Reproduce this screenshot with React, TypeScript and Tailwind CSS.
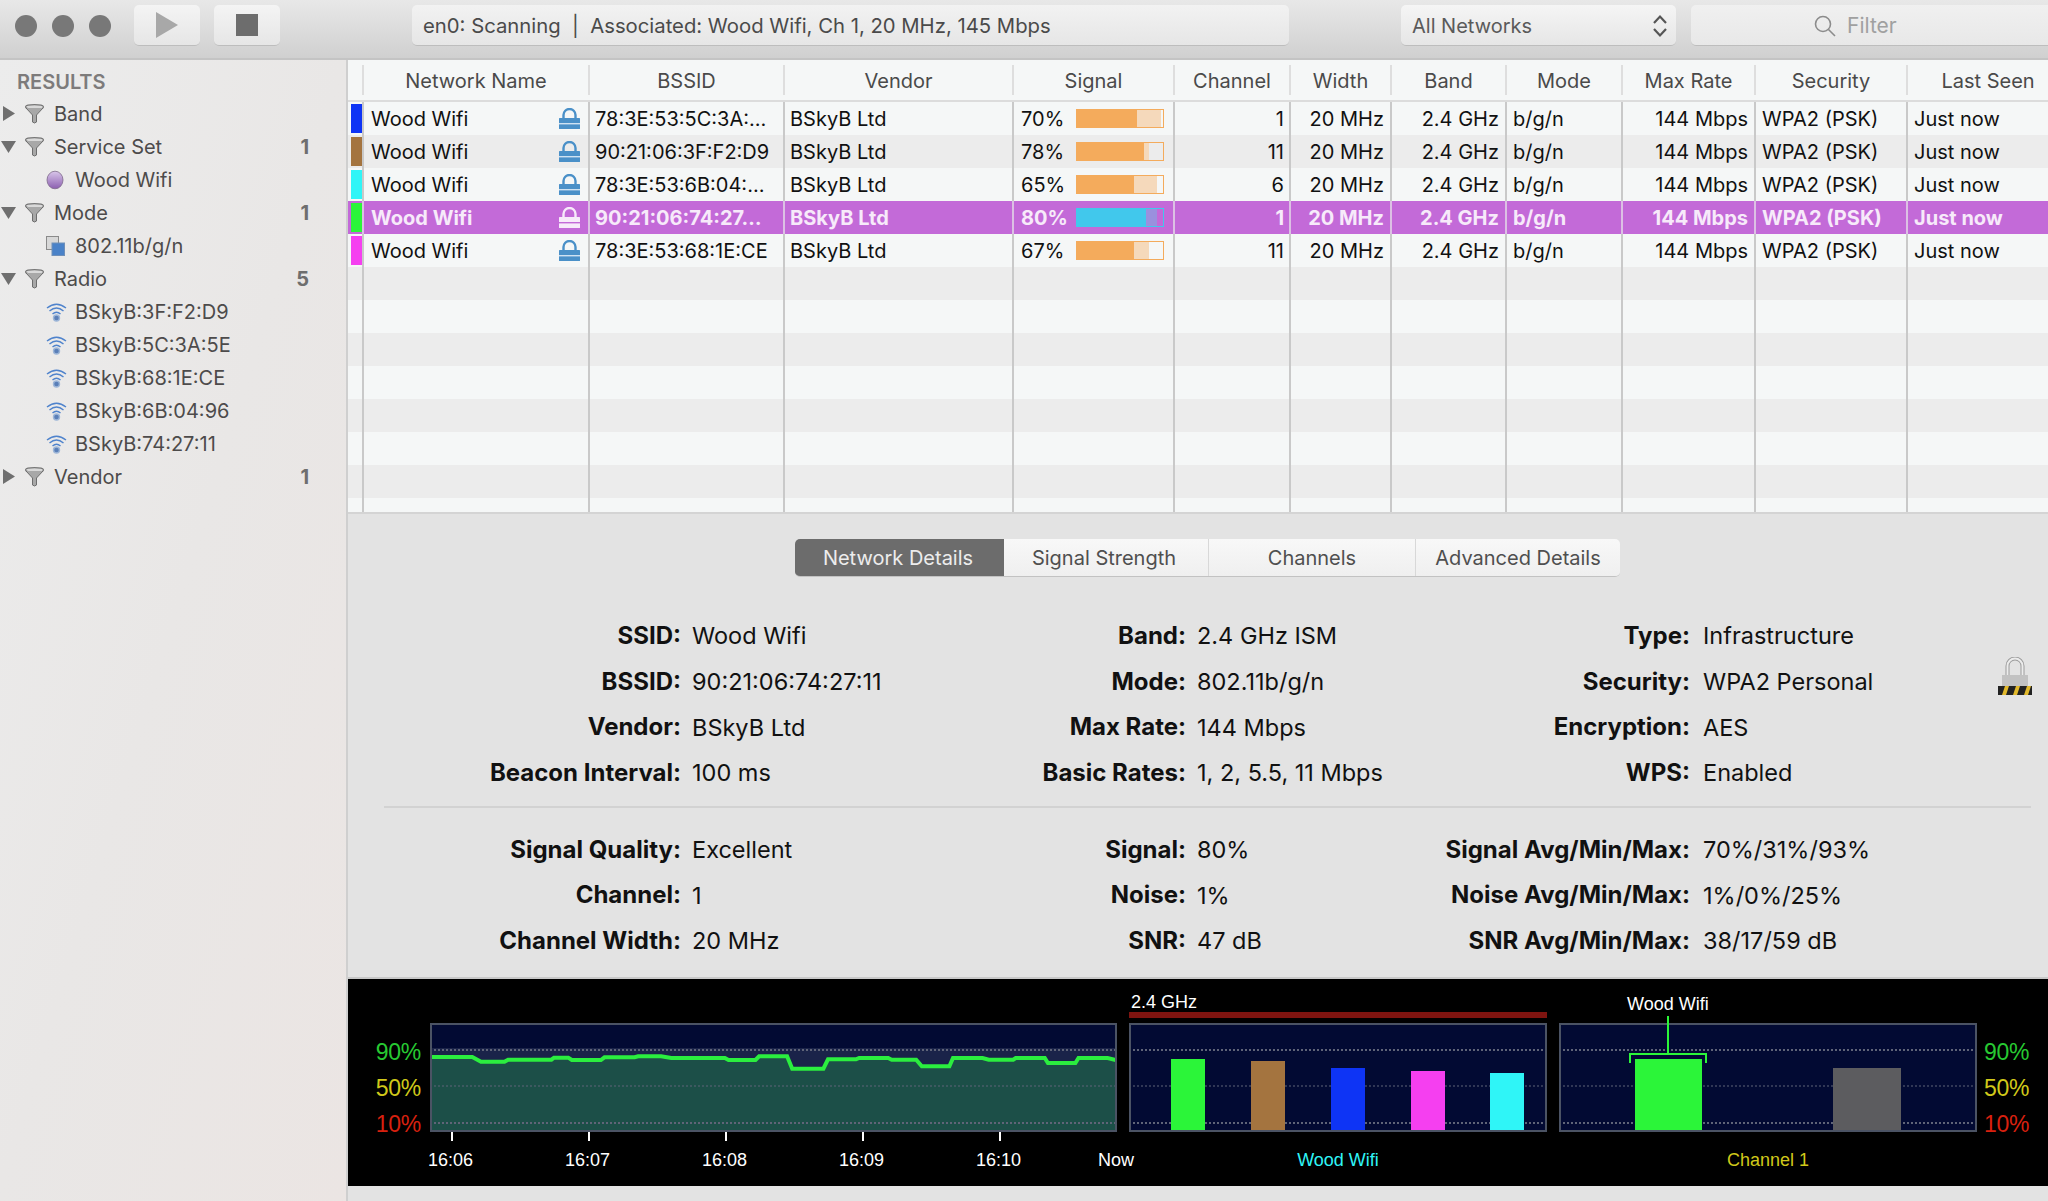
import React from "react";

const font = "font-['Inter','Liberation_Sans',sans-serif]";

function Triangle({ open }: { open: boolean }) {
  return (
    <svg width="15" height="15" viewBox="0 0 15 15" className="shrink-0">
      {open ? <path d="M0 2 H15 L7.5 14 Z" fill="#6f6f6f" /> : <path d="M2 0 L14 7.5 L2 15 Z" fill="#6f6f6f" />}
    </svg>
  );
}
function Funnel() {
  return (
    <svg width="19" height="20" viewBox="0 0 19 20" className="shrink-0 ml-[1px]">
      <ellipse cx="9.5" cy="3" rx="9" ry="2.4" fill="#d9d9d9" stroke="#777" strokeWidth="1.2" />
      <path d="M1 4 L7.5 11 V18 Q9.5 20 11.5 18 V11 L18 4" fill="#a8a8a8" stroke="#6d6d6d" strokeWidth="1" />
    </svg>
  );
}
function Ball() {
  return (
    <svg width="18" height="20" viewBox="0 0 18 20" className="shrink-0">
      <defs>
        <linearGradient id="ball" x1="0" y1="0" x2="0" y2="1">
          <stop offset="0" stopColor="#d9c6ea" />
          <stop offset="1" stopColor="#8c5fb0" />
        </linearGradient>
      </defs>
      <ellipse cx="9" cy="10" rx="8" ry="8.8" fill="url(#ball)" stroke="#7d6a8a" strokeWidth="0.8" />
    </svg>
  );
}
function ModeIcon() {
  return (
    <svg width="19" height="20" viewBox="0 0 19 20" className="shrink-0">
      <rect x="0.5" y="0.5" width="12" height="13" fill="#d8d8d8" stroke="#8a8a8a" />
      <rect x="6" y="7" width="12.5" height="12.5" fill="#4a82c8" stroke="#6f8fb8" />
    </svg>
  );
}
function WifiIcon() {
  return (
    <svg width="21" height="20" viewBox="0 0 21 20" className="shrink-0" fill="none" stroke="#4f83cc" strokeWidth="1.4">
      <path d="M1 6 Q10.5 -1.5 20 6" />
      <path d="M3.5 9 Q10.5 3 17.5 9" />
      <path d="M6.5 12 Q10.5 8.5 14.5 12" />
      <circle cx="10.5" cy="16" r="3" fill="#5a7fb8" stroke="#9db6d8" />
    </svg>
  );
}
function Lock({ white }: { white: boolean }) {
  const c = white ? "#f7eafa" : "#4a90c8";
  const s = white ? "#c36ad8" : "#cfe2f2";
  return (
    <svg width="21" height="21" viewBox="0 0 21 21" className="shrink-0">
      <path d="M4.5 10 V7 a6 6 0 0 1 12 0 V10" fill="none" stroke={c} strokeWidth="2.4" />
      <rect x="0" y="10" width="21" height="11" fill={c} rx="0.5" />
      <rect x="0" y="15" width="21" height="1.4" fill={s} />
    </svg>
  );
}

function SideRow({ kind, label, count, open, icon, }: { kind: "head" | "item"; label: string; count?: string; open?: boolean; icon?: React.ReactNode }) {
  if (kind === "head") {
    return (
      <div className="flex h-[33px] items-center pl-[1px] pr-[37px] text-[#4d4b4b] text-[20px]">
        <span className="w-[23px] flex"><Triangle open={!!open} /></span>
        <Funnel />
        <span className="ml-[10px] flex-1">{label}</span>
        <span className="font-bold text-[#6e6e6e]">{count}</span>
      </div>
    );
  }
  return (
    <div className="flex h-[33px] items-center pl-[46px] text-[#4d4b4b] text-[20px]">
      <span className="w-[29px] flex">{icon}</span>
      <span>{label}</span>
    </div>
  );
}

function Sidebar() {
  return (
    <div className="w-[348px] shrink-0 border-r-2 border-[#cfcfcf] bg-gradient-to-br from-[#ececec] via-[#e9e7e6] to-[#ebe5e3] pt-[6px]">
      <div className="h-[31px] pl-[17px] flex items-center text-[20px] font-semibold text-[#7d7b7b]">RESULTS</div>
      <SideRow kind="head" label="Band" />
      <SideRow kind="head" label="Service Set" count="1" open />
      <SideRow kind="item" label="Wood Wifi" icon={<Ball />} />
      <SideRow kind="head" label="Mode" count="1" open />
      <SideRow kind="item" label="802.11b/g/n" icon={<ModeIcon />} />
      <SideRow kind="head" label="Radio" count="5" open />
      {["BSkyB:3F:F2:D9", "BSkyB:5C:3A:5E", "BSkyB:68:1E:CE", "BSkyB:6B:04:96", "BSkyB:74:27:11"].map((l) => (
        <SideRow key={l} kind="item" label={l} icon={<WifiIcon />} />
      ))}
      <SideRow kind="head" label="Vendor" count="1" />
    </div>
  );
}

function Toolbar() {
  return (
    <div className="h-[60px] shrink-0 flex items-start pt-[5px] border-b-2 border-[#c4c4c4] bg-gradient-to-b from-[#e8e8e8] to-[#d0d0d0]">
      <div className="flex gap-[15px] pl-[15px] pt-[10px]">
        <div className="w-[22px] h-[22px] rounded-full bg-[#787878]" />
        <div className="w-[22px] h-[22px] rounded-full bg-[#787878]" />
        <div className="w-[22px] h-[22px] rounded-full bg-[#787878]" />
      </div>
      <button className="ml-[23px] w-[66px] h-[41px] rounded-[5px] bg-gradient-to-b from-[#f4f4f4] to-[#e6e6e6] border-b border-[#bdbdbd] flex items-center justify-center">
        <svg width="22" height="26" viewBox="0 0 22 26"><path d="M0 0 L22 13 L0 26 Z" fill="#a8a8a8" /></svg>
      </button>
      <button className="ml-[14px] w-[66px] h-[41px] rounded-[5px] bg-gradient-to-b from-[#f4f4f4] to-[#e6e6e6] border-b border-[#bdbdbd] flex items-center justify-center">
        <div className="w-[22px] h-[22px] bg-[#6d6d6d]" />
      </button>
      <div className="ml-[132px] w-[877px] h-[41px] rounded-[5px] bg-gradient-to-b from-[#f2f2f2] to-[#e6e6e6] border-b border-[#bdbdbd] flex items-center pl-[11px] pt-[2px] text-[20.3px] text-[#4a4a4a] whitespace-pre">
        en0: Scanning  |  Associated: Wood Wifi, Ch 1, 20 MHz, 145 Mbps
      </div>
      <div className="ml-[112px] w-[275px] h-[41px] rounded-[5px] bg-gradient-to-b from-[#f5f5f5] to-[#e6e6e6] border-b border-[#bdbdbd] flex items-center justify-between pl-[11px] pr-[8px] pt-[1px] text-[20px] text-[#5a5a5a]">
        <span>All Networks</span>
        <svg width="16" height="24" viewBox="0 0 16 24" fill="none" stroke="#555" strokeWidth="2.2">
          <path d="M2 9 L8 2.5 L14 9" />
          <path d="M2 15 L8 21.5 L14 15" />
        </svg>
      </div>
      <div className="ml-[15px] flex-1 h-[41px] rounded-l-[5px] bg-gradient-to-b from-[#f0f0f0] to-[#e8e8e8] border-b border-[#bdbdbd] flex items-center pl-[123px] pt-[2px] text-[21px] text-[#a0a0a0]">
        <svg width="22" height="22" viewBox="0 0 22 22" fill="none" stroke="#8c8c8c" strokeWidth="1.6" className="mr-[11px]">
          <circle cx="9" cy="9" r="7.5" />
          <path d="M14.5 14.5 L21 21" />
        </svg>
        <span>Filter</span>
      </div>
    </div>
  );
}

const HEADERS = ["Network Name", "BSSID", "Vendor", "Signal", "Channel", "Width", "Band", "Mode", "Max Rate", "Security", "Last Seen"];

function TableHeader() {
  const w = ["w-[226px]", "w-[195px]", "w-[229px]", "w-[161px]", "w-[116px]", "w-[101px]", "w-[115px]", "w-[116px]", "w-[133px]", "w-[152px]", "w-[160px]"];
  return (
    <div className="h-[42px] shrink-0 flex bg-[#f5f7f7] border-b-2 border-[#dcdcdc] pt-[5px] pb-[5px] text-[20px] text-[#4a4a4a]">
      <div className="w-[16px] shrink-0 border-r-2 border-[#dedede]" />
      {HEADERS.map((h, i) => (
        <div key={h} className={`${w[i]} shrink-0 flex items-center justify-center pt-[2px] ${i < 10 ? "border-r-2 border-[#dedede]" : ""}`}>
          {h}
        </div>
      ))}
    </div>
  );
}

interface Row { color: string; bssid: string; pct: number; fill: number; avg: number; ch: string; sel?: boolean }
const ROWS: Row[] = [
  { color: "bg-[#0e34f5]", bssid: "78:3E:53:5C:3A:…", pct: 70, fill: 70, avg: 98, ch: "1" },
  { color: "bg-[#a4743f]", bssid: "90:21:06:3F:F2:D9", pct: 78, fill: 78, avg: 84, ch: "11" },
  { color: "bg-[#2ff5f7]", bssid: "78:3E:53:6B:04:…", pct: 65, fill: 66, avg: 93, ch: "6" },
  { color: "bg-[#2bf539]", bssid: "90:21:06:74:27…", pct: 80, fill: 80, avg: 93, ch: "1", sel: true },
  { color: "bg-[#f53ff0]", bssid: "78:3E:53:68:1E:CE", pct: 67, fill: 66, avg: 84, ch: "11" },
];

function SignalBar({ r }: { r: Row }) {
  return (
    <div className={`w-[88px] h-[19px] border flex ${r.sel ? "border-[#41c8ec]" : "border-[#f4ab5c]"}`}>
      <div className={r.sel ? "bg-[#41c8ec]" : "bg-[#f4ab5c]"} style={{ width: `${r.fill}%` }} />
      <div className={r.sel ? "bg-[#9a90de]" : "bg-[#f5d9bb]"} style={{ width: `${r.avg - r.fill}%` }} />
    </div>
  );
}

function DataRow({ r, i }: { r?: Row; i: number }) {
  const sep = r?.sel ? "border-[#dcc0e4]" : "border-[#c9c9c9]";
  const bg = r?.sel ? "bg-[#c36ad8]" : i % 2 === 0 ? "bg-[#f5f7f7]" : "bg-[#ececec]";
  const txt = r?.sel ? "text-[#f7eafa] font-bold" : "text-[#111111]";
  const cell = `h-full flex items-center border-r-2 ${sep}`;
  return (
    <div className={`h-[33px] shrink-0 flex text-[20px] ${bg} ${txt}`}>
      <div className={`w-[16px] ${cell} pl-[3px] py-[2px]`}>
        {r && <div className={`w-[11px] h-full ${r.color}`} />}
      </div>
      <div className={`w-[226px] ${cell} pl-[7px] pr-[8px] justify-between`}>
        {r && <><span>Wood Wifi</span><Lock white={!!r.sel} /></>}
      </div>
      <div className={`w-[195px] ${cell} pl-[5px] whitespace-nowrap`}>{r?.bssid}</div>
      <div className={`w-[229px] ${cell} pl-[5px]`}>{r && "BSkyB Ltd"}</div>
      <div className={`w-[161px] ${cell} pl-[7px] justify-between pr-[9px]`}>
        {r && <><span>{r.pct}%</span><SignalBar r={r} /></>}
      </div>
      <div className={`w-[116px] ${cell} justify-end pr-[5px]`}>{r?.ch}</div>
      <div className={`w-[101px] ${cell} justify-end pr-[6px]`}>{r && "20 MHz"}</div>
      <div className={`w-[115px] ${cell} justify-end pr-[6px]`}>{r && "2.4 GHz"}</div>
      <div className={`w-[116px] ${cell} pl-[6px]`}>{r && "b/g/n"}</div>
      <div className={`w-[133px] ${cell} justify-end pr-[6px]`}>{r && "144 Mbps"}</div>
      <div className={`w-[152px] ${cell} pl-[6px]`}>{r && "WPA2 (PSK)"}</div>
      <div className="w-[140px] h-full flex items-center pl-[6px]">{r && "Just now"}</div>
    </div>
  );
}

function Table() {
  const empties = Array.from({ length: 8 }, (_, k) => k + 5);
  return (
    <div className="h-[454px] shrink-0 flex flex-col overflow-hidden border-b-2 border-[#d4d4d4]">
      <TableHeader />
      {ROWS.map((r, i) => <DataRow key={i} r={r} i={i} />)}
      {empties.map((i) => <DataRow key={i} i={i} />)}
    </div>
  );
}

function Tabs() {
  const names = ["Network Details", "Signal Strength", "Channels", "Advanced Details"];
  const w = ["w-[209px]", "w-[205px]", "w-[207px]", "w-[204px]"];
  return (
    <div className="mt-[25px] ml-[447px] w-[825px] h-[38px] shrink-0 flex rounded-[5px] overflow-hidden border-b border-[#c2c2c2] text-[20px]">
      {names.map((n, i) => (
        <div
          key={n}
          className={`${w[i]} flex items-center justify-center ${i === 0 ? "bg-[#6c6c6c] text-[#ececec] pr-[3px]" : "bg-gradient-to-b from-[#f8f8f8] to-[#efefef] text-[#4f4f4f]"} ${i === 1 ? "pr-[4px]" : ""} ${i > 0 && i < 3 ? "border-r border-[#d8d8d8]" : ""}`}
        >
          {n}
        </div>
      ))}
    </div>
  );
}

function Pair({ rows }: { rows: [string, string, string, string, string, string][] }) {
  return (
    <div className="grid grid-cols-[333px_180px_325px_180px_324px_1fr] text-[23.5px] text-[#111111]">
      {rows.flat().map((t, i) => (
        <div key={i} className={`h-[45.7px] flex items-center whitespace-nowrap ${i % 2 === 0 ? "justify-end font-bold text-[24px]" : i % 6 === 5 ? "pl-[13px]" : "pl-[11px]"}`}>
          {t}
        </div>
      ))}
    </div>
  );
}

function BigLock() {
  return (
    <svg width="36" height="38" viewBox="0 0 36 38">
      <path d="M10.5 20 V9 a7.5 7.5 0 0 1 15 0 V20" fill="none" stroke="#9c9c9c" strokeWidth="4" />
      <path d="M10.5 20 V9 a7.5 7.5 0 0 1 15 0 V20" fill="none" stroke="#ececec" strokeWidth="2" />
      <rect x="5" y="18" width="26" height="12" fill="#c2c2c2" />
      <rect x="1" y="29" width="34" height="9" fill="#222" />
      <path d="M5 38 L8 29 H12 L9 38 Z M16 38 L19 29 H23 L20 38 Z M27 38 L30 29 H34 L31 38 Z" fill="#e2b92c" />
    </svg>
  );
}

const LINE: [number, number][] = [[177,290],[260,290],[277,304],[323,304],[330,298],[415,298],[420,292],[448,292],[455,299],[512,299],[519,291],[578,291],[585,288],[630,288],[650,293],[755,293],[762,299],[815,299],[822,288],[877,288],[887,325],[948,325],[957,297],[1012,297],[1018,293],[1075,293],[1082,298],[1130,298],[1141,318],[1195,318],[1202,293],[1260,293],[1272,298],[1320,298],[1325,293],[1382,293],[1388,308],[1442,308],[1448,293],[1505,293],[1523,300]];

function Grid({ w }: { w: number }) {
  return (
    <>
      {[27, 63, 100].map((y) => (
        <line key={y} x1="0" x2={w} y1={y} y2={y} stroke="#5f6478" strokeWidth={y === 63 ? 1 : 2} strokeDasharray="2 2" />
      ))}
    </>
  );
}

function LinePlot() {
  const pts = LINE.map(([x, y]) => [(x - 177) / 1.96, (y - 188) / 3]);
  const d = pts.map((p) => `${p[0].toFixed(1)},${p[1].toFixed(1)}`).join(" ");
  return (
    <svg width="687" height="109" viewBox="0 0 687 109" className="block">
      <rect width="687" height="109" fill="#020a33" />
      <rect y="25" width="687" height="25" fill="#1a2349" />
      <polygon points={`0,109 ${d} 687,109`} fill="#1c4f48" />
      <Grid w={687} />
      <polyline points={d} fill="none" stroke="#2bee3f" strokeWidth="4" />
      <rect x="1" y="1" width="685" height="107" fill="none" stroke="#4b5364" strokeWidth="2" />
    </svg>
  );
}

function BandPlot() {
  const bars: [number, number, string][] = [[42, 36, "#2bf539"], [122, 38, "#a4743f"], [202, 45, "#0e34f5"], [282, 48, "#f53ff0"], [361, 50, "#2ff5f7"]];
  return (
    <svg width="418" height="109" viewBox="0 0 418 109" className="block">
      <rect width="418" height="109" fill="#020a33" />
      <Grid w={418} />
      {bars.map(([x, y, c]) => <rect key={x} x={x} y={y} width="34" height={107 - y} fill={c} />)}
      <rect x="1" y="1" width="416" height="107" fill="none" stroke="#4b5364" strokeWidth="2" />
    </svg>
  );
}

function ChannelPlot() {
  return (
    <svg width="418" height="109" viewBox="0 0 418 109" className="block overflow-visible">
      <rect width="418" height="109" fill="#020a33" />
      <Grid w={418} />
      <rect x="76" y="36" width="67" height="71" fill="#2bf539" />
      <rect x="274" y="45" width="68" height="62" fill="#5c5c5f" />
      <rect x="1" y="1" width="416" height="107" fill="none" stroke="#4b5364" strokeWidth="2" />
      <path d="M109 -7 V30 M71 40 V31 H147 V40" fill="none" stroke="#2bf539" strokeWidth="2" />
    </svg>
  );
}

function Pcts({ align }: { align: string }) {
  return (
    <div className={`h-[109px] flex flex-col ${align} text-[23px] tracking-[-0.3px] leading-[23px] pt-[18px] gap-[13px]`}>
      <span className="text-[#27c932]">90%</span>
      <span className="text-[#d0c81a]">50%</span>
      <span className="text-[#d8200f]">10%</span>
    </div>
  );
}

function Charts() {
  const ticks = ["16:06", "16:07", "16:08", "16:09", "16:10"];
  return (
    <div className="h-[209px] shrink-0 bg-black border-t-2 border-[#c8c8c8] font-['Liberation_Sans',sans-serif] text-[18px] text-white grid grid-cols-[74px_687px_12px_418px_12px_418px_79px] grid-rows-[44px_109px_54px] pl-[8px]">
      <div />
      <div />
      <div />
      <div className="flex flex-col pt-[14px]">
        <span className="pl-[2px] leading-[19px]">2.4 GHz</span>
        <div className="h-[6px] bg-[#7e1410]" />
      </div>
      <div />
      <div className="pt-[12px] pl-[68px]"><span className="leading-[20px]">Wood Wifi</span></div>
      <div />

      <Pcts align="items-end pr-[9px]" />
      <LinePlot />
      <div />
      <BandPlot />
      <div />
      <ChannelPlot />
      <Pcts align="items-start pl-[7px]" />

      <div />
      <div>
        <div className="flex pl-[21px] gap-[135px]">
          {ticks.map((t) => <div key={t} className="w-[2px] h-[9px] bg-white shrink-0" />)}
        </div>
        <div className="flex ml-[-2px] mt-[6px]">
          {ticks.map((t) => <span key={t} className="w-[137px] shrink-0">{t}</span>)}
          <span className="ml-[-15px] shrink-0">Now</span>
        </div>
      </div>
      <div />
      <div className="text-[#2ff5f7] text-center pt-[15px]">Wood Wifi</div>
      <div />
      <div className="text-[#d0c81a] text-center pt-[15px]">Channel 1</div>
      <div />
    </div>
  );
}

export default function App() {
  return (
    <div className={`w-[2048px] h-[1201px] overflow-hidden flex flex-col bg-[#e3e3e3] ${font}`}>
      <Toolbar />
      <div className="flex flex-1 min-h-0">
        <Sidebar />
        <div className="flex-1 min-w-0 flex flex-col relative">
          <Table />
          <Tabs />
          <div className="mt-[36px]">
            <Pair rows={[
              ["SSID:", "Wood Wifi", "Band:", "2.4 GHz ISM", "Type:", "Infrastructure"],
              ["BSSID:", "90:21:06:74:27:11", "Mode:", "802.11b/g/n", "Security:", "WPA2 Personal"],
              ["Vendor:", "BSkyB Ltd", "Max Rate:", "144 Mbps", "Encryption:", "AES"],
              ["Beacon Interval:", "100 ms", "Basic Rates:", "1, 2, 5.5, 11 Mbps", "WPS:", "Enabled"],
            ]} />
          </div>
          <div className="mt-[10px] ml-[36px] mr-[17px] h-[2px] bg-[#d2d2d2]" />
          <div className="mt-[19px]">
            <Pair rows={[
              ["Signal Quality:", "Excellent", "Signal:", "80%", "Signal Avg/Min/Max:", "70%/31%/93%"],
              ["Channel:", "1", "Noise:", "1%", "Noise Avg/Min/Max:", "1%/0%/25%"],
              ["Channel Width:", "20 MHz", "SNR:", "47 dB", "SNR Avg/Min/Max:", "38/17/59 dB"],
            ]} />
          </div>
          <div className="absolute left-[1649px] top-[597px]"><BigLock /></div>
          <div className="mt-[13px]"><Charts /></div>
        </div>
      </div>
    </div>
  );
}
